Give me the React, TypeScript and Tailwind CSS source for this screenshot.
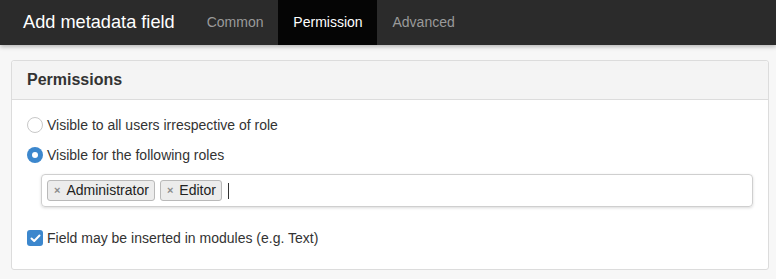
import { useState } from 'react'

const tabs = ['Common', 'Permission', 'Advanced']

const Radio = ({ checked }: { checked: boolean }) =>
  checked ? (
    <span className="w-4 h-4 rounded-full bg-[#3c87cd] flex items-center justify-center shrink-0">
      <span className="w-[6px] h-[6px] rounded-full bg-white" />
    </span>
  ) : (
    <span className="w-4 h-4 rounded-full border border-[#c8c8c8] bg-white shrink-0" />
  )

const Tag = ({ label }: { label: string }) => (
  <span className="flex items-center gap-[6px] h-[21px] pl-[6px] pr-[5px] rounded-[3px] border border-[#b9b9b9] bg-[#ececec] text-[#222] text-[14px]">
    <span className="text-[#8a8a8a] text-[11px] font-bold leading-none">×</span>
    {label}
  </span>
)

export default function App() {
  const [visibility] = useState<'all' | 'roles'>('roles')

  return (
    <div className="w-[776px] h-[279px] bg-[#f7f7f7] font-['Liberation_Sans',Arial,sans-serif] overflow-hidden">
      {/* Top bar */}
      <div className="h-[45px] bg-[#2b2b2b] flex items-stretch shadow-[0_2px_4px_rgba(0,0,0,0.25)] relative">
        <h1 className="text-white text-[18.2px] pl-[23px] pr-[17px] flex items-center">Add metadata field</h1>
        {tabs.map((t) => (
          <div
            key={t}
            className={
              t === 'Permission'
                ? 'bg-[#050505] text-white text-[14px] px-[15px] flex items-center w-[99px] justify-center'
                : 'text-[#9a9a9a] text-[14px] px-[15px] flex items-center'
            }
          >
            {t}
          </div>
        ))}
      </div>

      {/* Panel */}
      <div className="ml-[11px] mr-[7px] mt-[15px] border border-[#dcdcdc] rounded-[3px] bg-white">
        <div className="h-[39px] bg-[#f4f4f4] border-b border-[#dcdcdc] flex items-center px-[15px] rounded-t-[3px]">
          <h2 className="text-[16px] font-bold text-[#333]">Permissions</h2>
        </div>
        <div className="px-[15px] pt-[17px] pb-[23px] text-[14px] text-[#333]">
          <label className="flex items-center gap-[4px] h-4">
            <Radio checked={visibility === 'all'} />
            Visible to all users irrespective of role
          </label>
          <label className="flex items-center gap-[4px] h-4 mt-[14px]">
            <Radio checked={visibility === 'roles'} />
            Visible for the following roles
          </label>
          <div className="ml-[14px] mt-[11px] h-[33px] border border-[#cfcfcf] rounded-[4px] shadow-[0_1px_3px_rgba(0,0,0,0.15)] flex items-center gap-[5px] px-[5px]">
            <Tag label="Administrator" />
            <Tag label="Editor" />
            <span className="w-px h-[16px] bg-[#333] ml-[1px]" />
          </div>
          <label className="flex items-center gap-[4px] h-4 mt-[23px]">
            <span className="w-4 h-4 rounded-[3px] bg-[#3c87cd] flex items-center justify-center shrink-0">
              <svg width="11" height="9" viewBox="0 0 11 9" fill="none">
                <path d="M1.5 4.5 L4.2 7 L9.5 1.5" stroke="white" strokeWidth="2" strokeLinecap="round" strokeLinejoin="round" />
              </svg>
            </span>
            Field may be inserted in modules (e.g. Text)
          </label>
        </div>
      </div>
    </div>
  )
}
